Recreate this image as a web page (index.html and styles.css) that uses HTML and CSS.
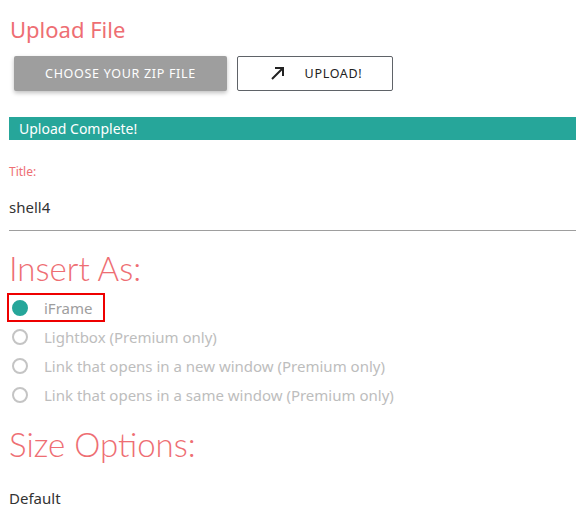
FILE: index.html
```html
<!DOCTYPE html>
<html>
<head>
<meta charset="utf-8">
<link rel="stylesheet" href="styles.css">
</head>
<body>
<div class="page">
  <h2 class="title">Upload File</h2>
  <div class="btn-row">
    <button class="btn btn-choose">Choose your zip file</button>
    <button class="btn btn-upload">
      <svg class="arrow" width="15" height="15" viewBox="0 0 15 15"><path d="M2 13 L13 2 M5 2 H13 V10" fill="none" stroke="#222" stroke-width="2"/></svg>
      <span>Upload!</span>
    </button>
  </div>
  <div class="status">Upload Complete!</div>
  <label class="field-label">Title:</label>
  <div class="field-input">shell4</div>
  <h3 class="section">Insert As:</h3>
  <ul class="radios">
    <li class="radio checked"><span class="dot"></span><span class="rlabel">iFrame</span></li>
    <li class="radio disabled"><span class="dot"></span><span class="rlabel">Lightbox (Premium only)</span></li>
    <li class="radio disabled"><span class="dot"></span><span class="rlabel">Link that opens in a new window (Premium only)</span></li>
    <li class="radio disabled"><span class="dot"></span><span class="rlabel">Link that opens in a same window (Premium only)</span></li>
  </ul>
  <h3 class="section">Size Options:</h3>
  <div class="default">Default</div>
</div>
</body>
</html>
```
FILE: styles.css
```css
* { box-sizing: border-box; }
html, body { margin: 0; padding: 0; background: #fff; }
body { font-family: "Noto Sans", "Open Sans", sans-serif; color: #333; }
.page { padding: 0 0 0 9px; }
.title {
  margin: 0; padding-top: 14px;
  font-size: 22px; font-weight: 400; line-height: 30px;
  color: #ee6e73; padding-left: 1px;
}
.btn-row { display: flex; gap: 10px; margin-top: 12px; padding-left: 5px; }
.btn {
  height: 35px; font-family: inherit; font-size: 12.5px; letter-spacing: 0.7px;
  text-transform: uppercase; border-radius: 2px; cursor: pointer;
  display: flex; align-items: center; justify-content: center;
}
.btn-choose {
  width: 213px; background: #9e9e9e; color: #fff; border: none;
  box-shadow: 0 2px 4px rgba(0,0,0,0.25);
}
.btn-upload {
  width: 156px; background: #fff; color: #222; border: 1px solid #5f6368;
  gap: 20px; padding-right: 4px;
}
.arrow { display: block; }
.status {
  margin-top: 26px; height: 23px; background: #26a69a; color: #fff;
  font-size: 14px; line-height: 23px; padding-left: 10px;
}
.field-label { display: block; margin-top: 24px; font-size: 12px; color: #ee6e73; line-height: 16px; }
.field-input {
  margin-top: 15px; font-size: 15px; line-height: 24px; color: #333;
  border-bottom: 1px solid #9e9e9e; padding-bottom: 11px;
}
.section {
  margin: 0; font-family: Lato, "Noto Sans", sans-serif;
  font-size: 33px; font-weight: 300; color: #ee6e73; line-height: 40px;
}
.field-input + .section { margin-top: 17px; }
.radios + .section { margin-top: 15px; }
.radios { list-style: none; margin: 5px 0 0 0; padding: 0; }
.radio { display: flex; align-items: center; height: 29px; font-size: 15px; color: #9e9e9e; }
.radio.disabled { color: #bdbdbd; }
.dot {
  width: 16px; height: 16px; border-radius: 50%; border: 2px solid #c4c4c4;
  margin-left: 3px; margin-right: 16px; flex: none;
}
.radio.checked { position: relative; }
.radio.checked .dot { background: #26a69a; border-color: #26a69a; }
.radio.checked::after {
  content: ""; position: absolute; left: -2px; top: 0; width: 98px; height: 29px;
  border: 2px solid #e00; box-sizing: border-box;
}
.default { margin-top: 24px; font-size: 15px; color: #333; }
```
